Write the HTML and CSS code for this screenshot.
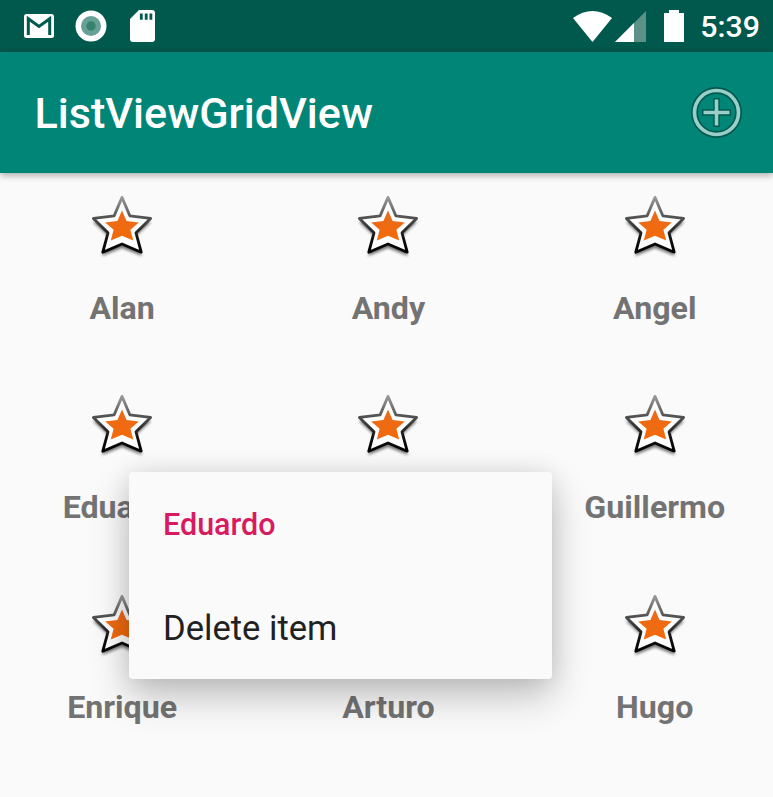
FILE: index.html
```html
<!DOCTYPE html>
<html lang="en">
<head>
<meta charset="utf-8">
<title>ListViewGridView</title>
<link rel="stylesheet" href="styles.css">
</head>
<body>
<svg class="defs" width="0" height="0" aria-hidden="true">
  <defs>
    <linearGradient id="edge" x1="0" y1="0" x2="0" y2="1">
      <stop offset="0" stop-color="#999"/>
      <stop offset=".35" stop-color="#555"/>
      <stop offset=".75" stop-color="#111"/>
      <stop offset="1" stop-color="#000"/>
    </linearGradient>
    <linearGradient id="core" x1="0" y1="0" x2="0" y2="1">
      <stop offset="0" stop-color="#ea6a1c"/>
      <stop offset="1" stop-color="#f36a08"/>
    </linearGradient>
    <filter id="soft" x="-20%" y="-20%" width="140%" height="150%">
      <feGaussianBlur stdDeviation="1.7"/>
    </filter>
    <symbol id="star" viewBox="0 0 70 70">
      <path d="M35 11 43 28 64 32 49 46 55 66 35 58 15 66 21 46 6 32 27 28Z" fill="#000" opacity=".55" filter="url(#soft)"/>
      <path d="M35 7.4 42.8 25.8 63.6 28.4 49 42.8 54.2 62.2 35 54 15.8 62.2 21 42.8 6.4 28.4 27.2 25.8Z" fill="#fdfdfd" stroke="url(#edge)" stroke-width="2.8" stroke-linejoin="round"/>
      <path d="M35 20.4 39.6 30.9 51.8 32.4 43.4 39.7 46.2 50.6 35 45.8 23.8 50.6 26.6 39.7 18.2 32.4 30.4 30.9Z" fill="url(#core)"/>
    </symbol>
  </defs>
</svg>
<div class="screen">
  <header class="status">
    <svg class="mail" viewBox="0 0 30 24"><rect width="30" height="24" rx="2.5" fill="#fff"/><path d="M4.3 21V4.8L15 12.5 25.7 4.8V21" fill="none" stroke="#00594c" stroke-width="3"/></svg>
    <svg class="sync" viewBox="0 0 32 32"><circle cx="16" cy="16" r="15.5" fill="#fff"/><circle cx="16" cy="16" r="10" fill="#66a096"/><circle cx="16" cy="16" r="4.7" fill="#38816f"/></svg>
    <svg class="card" viewBox="0 0 25 32"><path d="M9 0H22Q25 0 25 3V29Q25 32 22 32H3Q0 32 0 29V9Z" fill="#fff"/><path d="M11.3 3.5V9.8M16.2 3.5V9.8M20.9 3.5V9.8" stroke="#00594c" stroke-width="2.8"/></svg>
    <div class="system">
      <svg class="wifi" viewBox="0 0 39 31"><path d="M0 7Q19.5-7 39 7L19.5 31Z" fill="#fff"/></svg>
      <svg class="cell" viewBox="0 0 31 31"><path d="M31 0V31H0Z" fill="#5b9187"/><path d="M19 12V31H0Z" fill="#fff"/></svg>
      <svg class="battery" viewBox="0 0 20 32"><path d="M5 0H15V3H20V32H0V3H5Z" fill="#fff"/></svg>
      <span class="clock">5:39</span>
    </div>
  </header>
  <div class="toolbar">
    <h1 class="title">ListViewGridView</h1>
    <svg class="add" viewBox="0 0 52 52"><g fill="none" stroke="#00594e"><circle cx="26.5" cy="25.5" r="22" stroke-width="6.8"/><path d="M26.5 11V40M12 25.5H41" stroke-width="6.4"/></g><g fill="none" stroke="#99cfc8"><circle cx="26.5" cy="25.5" r="22" stroke-width="3.7"/><path d="M26.5 12.5V38.5M13.5 25.5H39.5" stroke-width="3.6"/></g></svg>
  </div>
  <main class="grid">
    <div class="cell-item"><svg class="star"><use href="#star"/></svg><span>Alan</span></div>
    <div class="cell-item"><svg class="star"><use href="#star"/></svg><span>Andy</span></div>
    <div class="cell-item"><svg class="star"><use href="#star"/></svg><span>Angel</span></div>
    <div class="cell-item"><svg class="star"><use href="#star"/></svg><span>Eduardo</span></div>
    <div class="cell-item"><svg class="star"><use href="#star"/></svg><span></span></div>
    <div class="cell-item"><svg class="star"><use href="#star"/></svg><span>Guillermo</span></div>
    <div class="cell-item"><svg class="star"><use href="#star"/></svg><span>Enrique</span></div>
    <div class="cell-item"><svg class="star"><use href="#star"/></svg><span>Arturo</span></div>
    <div class="cell-item"><svg class="star"><use href="#star"/></svg><span>Hugo</span></div>
  </main>
  <div class="menu">
    <div class="menu-title">Eduardo</div>
    <div class="menu-item">Delete item</div>
  </div>
</div>
</body>
</html>
```
FILE: styles.css
```css
body {
  margin: 0;
  font-family: Roboto, sans-serif;
  background: #fafafa;
}
svg { display: block; flex: none; }
.defs { position: absolute; }
.screen {
  position: relative;
  width: 773px;
  height: 797px;
  overflow: hidden;
}
.status {
  display: flex;
  align-items: center;
  height: 52px;
  box-sizing: border-box;
  padding: 0 13px 0 24px;
  background: #00594c;
  color: #fff;
}
.mail { width: 30px; height: 24px; }
.sync { width: 32px; height: 32px; margin-left: 21px; }
.card { width: 25px; height: 32px; margin-left: 23px; }
.system { display: flex; align-items: center; margin-left: auto; }
.wifi { width: 39px; height: 31px; }
.cell { width: 31px; height: 31px; margin-left: 3px; }
.battery { width: 20px; height: 32px; margin-left: 18px; }
.clock {
  margin-left: 16px;
  padding-top: 2px;
  font-size: 30.3px;
  font-weight: 500;
  line-height: 50px;
}
.toolbar {
  position: relative;
  display: flex;
  align-items: center;
  justify-content: space-between;
  height: 121px;
  box-sizing: border-box;
  padding: 0 31px 0 34.5px;
  background: #008577;
  color: #fff;
  box-shadow: 0 2px 7px rgba(0, 0, 0, .35);
}
.title {
  margin: 3px 0 0;
  font-size: 43.1px;
  font-weight: 500;
  line-height: 50px;
}
.add { width: 52px; height: 52px; }
.grid {
  display: grid;
  grid-template-columns: repeat(3, 266.3px);
  grid-auto-rows: 199.3px;
  margin-left: -11px;
}
.cell-item {
  display: flex;
  flex-direction: column;
  align-items: center;
  padding-top: 17px;
  color: #737373;
  font-size: 32.2px;
  font-weight: 700;
  line-height: 38px;
}
.star { width: 70px; height: 70px; margin-bottom: 29px; }
.menu {
  position: absolute;
  left: 129px;
  top: 472px;
  width: 423px;
  height: 207px;
  box-sizing: border-box;
  padding: 0 34px;
  border-radius: 4px;
  background: #fafafa;
  box-shadow: 0 17px 38px rgba(0, 0, 0, .24), 0 0 24px rgba(0, 0, 0, .09);
}
.menu-title {
  height: 104px;
  color: #d81b60;
  font-size: 30.5px;
  font-weight: 500;
  line-height: 106px;
}
.menu-item {
  color: #212121;
  font-size: 34.6px;
  line-height: 105px;
}
```
